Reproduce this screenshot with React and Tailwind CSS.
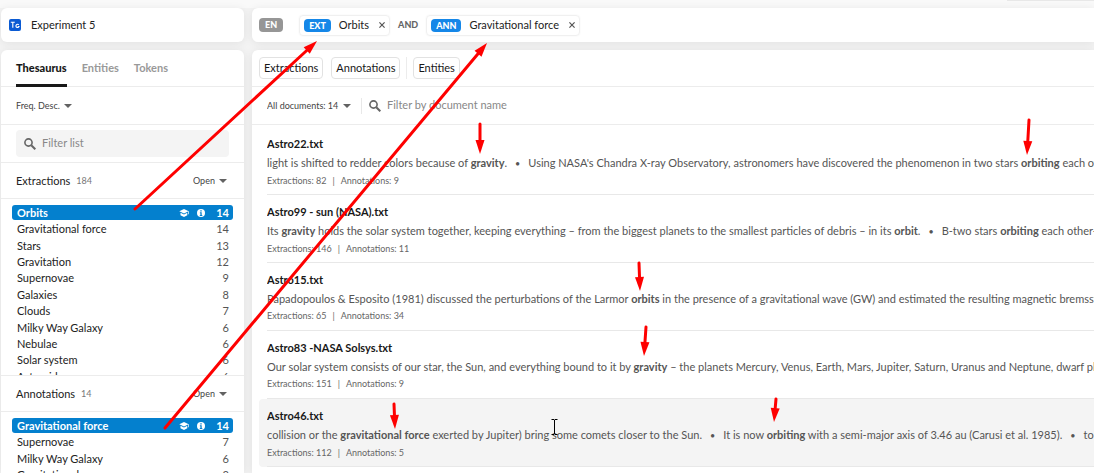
import { Fragment } from "react";

const extractions = [
  ["Orbits", 14],
  ["Gravitational force", 14],
  ["Stars", 13],
  ["Gravitation", 12],
  ["Supernovae", 9],
  ["Galaxies", 8],
  ["Clouds", 7],
  ["Milky Way Galaxy", 6],
  ["Nebulae", 6],
  ["Solar system", 6],
  ["Asteroid", 6],
];

const annotations = [
  ["Gravitational force", 14],
  ["Supernovae", 7],
  ["Milky Way Galaxy", 6],
  ["Gravitational", 3],
  ["Nebulae", 3],
];

// Each document holds a list of snippets; odd parts of a snippet are highlighted hits.
const documents = [
  {
    name: "Astro22.txt",
    snippets: [
      ["light is shifted to redder colors because of ", "gravity", "."],
      [
        "Using NASA's Chandra X-ray Observatory, astronomers have discovered the phenomenon in two stars ",
        "orbiting",
        " each other in our galaxy.",
      ],
    ],
    extractions: 82,
    annotations: 9,
  },
  {
    name: "Astro99 - sun (NASA).txt",
    snippets: [
      [
        "Its ",
        "gravity",
        " holds the solar system together, keeping everything – from the biggest planets to the smallest particles of debris – in its ",
        "orbit",
        ".",
      ],
      ["B-two stars ", "orbiting", " each other-are found."],
    ],
    extractions: 146,
    annotations: 11,
  },
  {
    name: "Astro15.txt",
    snippets: [
      [
        "Papadopoulos & Esposito (1981) discussed the perturbations of the Larmor ",
        "orbits",
        " in the presence of a gravitational wave (GW) and estimated the resulting magnetic bremsstrahlung radiation.",
      ],
    ],
    extractions: 65,
    annotations: 34,
  },
  {
    name: "Astro83 -NASA Solsys.txt",
    snippets: [
      [
        "Our solar system consists of our star, the Sun, and everything bound to it by ",
        "gravity",
        " – the planets Mercury, Venus, Earth, Mars, Jupiter, Saturn, Uranus and Neptune, dwarf planets such as Pluto.",
      ],
    ],
    extractions: 151,
    annotations: 9,
  },
  {
    name: "Astro46.txt",
    active: true,
    snippets: [
      ["collision or the ", "gravitational force", " exerted by Jupiter) bring some comets closer to the Sun."],
      ["It is now ", "orbiting", " with a semi-major axis of 3.46 au (Carusi et al. 1985)."],
      ["to lose its volatile ices."],
    ],
    extractions: 112,
    annotations: 5,
  },
];

const arrows = [
  [135, 209, 317, 41],
  [165, 428, 487, 43],
  [480, 124, 480, 154],
  [1029, 120, 1027, 155],
  [639, 263, 640, 291],
  [646, 327, 644, 356],
  [394, 404, 395, 429],
  [776, 399, 774, 422],
];

function Arrow({ points: [x1, y1, x2, y2] }) {
  const length = Math.hypot(x2 - x1, y2 - y1);
  const ux = (x2 - x1) / length;
  const uy = (y2 - y1) / length;
  const bx = x2 - ux * 14;
  const by = y2 - uy * 14;
  const head = `${x2},${y2} ${bx - uy * 4.5},${by + ux * 4.5} ${bx + uy * 4.5},${by - ux * 4.5}`;
  return (
    <g>
      <line x1={x1} y1={y1} x2={bx} y2={by} stroke="#fe0000" strokeWidth="3" strokeLinecap="round" />
      <polygon points={head} fill="#fe0000" />
    </g>
  );
}

function Caret() {
  return (
    <svg viewBox="0 0 8 4" className="pointer-events-none h-1 w-2 shrink-0" aria-hidden="true">
      <path d="M0 0h8L4 4z" fill="#626262" />
    </svg>
  );
}

function SearchIcon() {
  return (
    <svg viewBox="0 0 12 12" className="h-3 w-3 shrink-0" fill="none" stroke="#666" aria-hidden="true">
      <circle cx="4.5" cy="4.5" r="3.6" strokeWidth="1.6" />
      <path d="M7.3 7.3l4 4" strokeWidth="2" />
    </svg>
  );
}

function CloseIcon() {
  return (
    <svg viewBox="0 0 6 6" className="h-1.5 w-1.5" stroke="#555" strokeWidth="1.2" aria-hidden="true">
      <path d="M0.4 0.4l5.2 5.2M5.6 0.4L0.4 5.6" />
    </svg>
  );
}

function Dropdown({ label, value, className }) {
  return (
    <label className={`flex items-center gap-1 text-[9px] leading-4 text-[#444] ${className ?? ""}`}>
      <select aria-label={label} className="appearance-none bg-transparent outline-none">
        <option>{value}</option>
      </select>
      <Caret />
    </label>
  );
}

function SectionHeader({ title, count }) {
  return (
    <div className="flex h-9 shrink-0 items-center border-b border-[#ececec] pl-[15px] pr-[17px]">
      <h2 className="text-[11px] leading-4 text-[#222]">{title}</h2>
      <span className="ml-1.5 text-[9px] leading-4 text-[#777]">{count}</span>
      <Dropdown label={`${title} filter`} value="Open" className="ml-auto" />
    </div>
  );
}

function TermRow({ name, count, selected }) {
  if (selected) {
    return (
      <li>
        <button
          type="button"
          className="flex h-[15px] w-full items-center rounded-[3px] bg-[#0480ce] px-1 pl-[5px] text-[11px] leading-[15px] font-bold text-white"
        >
          <span>{name}</span>
          <svg viewBox="0 0 10 8" className="ml-auto h-2 w-[10px]" fill="#fff" aria-hidden="true">
            <path d="M5 0L0.3 2.3 5 4.6l4-2v2.6h.7V2.3z" />
            <path d="M1.5 3.8v2.5L5 8l3.3-1.7V3.8L5 5.5z" />
          </svg>
          <svg viewBox="0 0 8 8" className="ml-2 h-2 w-2" aria-hidden="true">
            <circle cx="4" cy="4" r="4" fill="#fff" />
            <path d="M3.3 1.2h1.4v1.3H3.3zM2.9 3.3h1.8v2.8h.6v.9H2.8v-.9h.6V4.2h-.5z" fill="#0480ce" />
          </svg>
          <span className="w-6 text-right">{count}</span>
        </button>
      </li>
    );
  }
  return (
    <li>
      <button type="button" className="flex h-[15px] w-full items-center justify-between pr-1 pl-[5px] text-[11px] leading-[15px] text-[#222]">
        <span>{name}</span>
        <span className="text-[#555]">{count}</span>
      </button>
    </li>
  );
}

function QueryChip({ tag, name }) {
  return (
    <div className="flex h-[21px] items-center rounded border border-[#f0f0f0] px-1 shadow-[0_0_2px_rgba(0,0,0,0.05)]">
      <span className="rounded bg-[#1587e8] px-[5px] text-[9px] leading-[13px] font-black text-white">{tag}</span>
      <span className="ml-2 text-[11px] leading-4 text-[#222]">{name}</span>
      <button type="button" aria-label={`Remove ${name}`} className="ml-2.5 flex">
        <CloseIcon />
      </button>
    </div>
  );
}

function Snippet({ parts }) {
  return parts.map((part, i) => (i % 2 ? <b key={i}>{part}</b> : <Fragment key={i}>{part}</Fragment>));
}

function DocumentRow({ doc }) {
  return (
    <li className={doc.active ? "ml-[7px] rounded-l bg-[#f4f4f4] pl-2" : "ml-[15px]"}>
      <article className="flex h-[68px] flex-col overflow-hidden border-b border-[#e8e8e8] pt-[9px] whitespace-nowrap">
        <h3 className="text-[11px] leading-4 font-bold text-[#181818]">
          <a href="#document">{doc.name}</a>
        </h3>
        <p className="mt-[3px] text-[11px] leading-4 text-[#555]">
          {doc.snippets.map((parts, i) => (
            <Fragment key={i}>
              {i > 0 && <span className="mx-2 text-[9px]">•</span>}
              <Snippet parts={parts} />
            </Fragment>
          ))}
        </p>
        <p className="mt-px flex gap-1.5 text-[9px] leading-4 text-[#666]">
          <span>Extractions: {doc.extractions}</span>
          <span>|</span>
          <span>Annotations: {doc.annotations}</span>
        </p>
      </article>
    </li>
  );
}

const cardShadow = "shadow-[0_1px_8px_rgba(0,0,0,0.08)]";

export default function App() {
  return (
    <div className="relative flex h-screen flex-col overflow-hidden bg-[#f3f3f3] font-['Lato','Open_Sans',sans-serif] text-[11px]">
      <div className="flex h-2 shrink-0 justify-end bg-[#f9f9f9]">
        <div className="h-px w-[87px] bg-[#e8e8e8]" />
      </div>
      <div className="flex min-h-0 flex-1 gap-2 pl-px">
        <div className="flex w-[243px] shrink-0 flex-col gap-2">
          <header className={`flex h-[34px] shrink-0 items-center gap-2.5 rounded-md bg-white pl-2 ${cardShadow}`}>
            <svg viewBox="0 0 12 12" className="h-3 w-3" aria-hidden="true">
              <rect width="12" height="12" rx="2" fill="#0b5bd3" />
              <path d="M1.8 3.3h4M3.8 3.3v5.4M9.8 5.9a1.6 1.6 0 1 0 .2 1.6H8.7" fill="none" stroke="#fff" strokeWidth="1.1" />
            </svg>
            <h1 className="text-[11px] leading-4 text-[#222]">Experiment 5</h1>
          </header>
          <aside className={`flex min-h-0 flex-1 flex-col rounded-t-md bg-white ${cardShadow}`}>
            <nav className="flex h-[37px] shrink-0 gap-[15px] border-b border-[#ececec] pl-[15px] text-[11px] font-bold text-[#999]">
              <button type="button" className="-mb-px border-b-[3px] border-[#181818] pt-[3px] font-black text-[#181818]">
                Thesaurus
              </button>
              <button type="button">Entities</button>
              <button type="button">Tokens</button>
            </nav>
            <div className="flex h-[38px] shrink-0 items-center border-b border-[#ececec] pl-[15px]">
              <Dropdown label="Sort order" value="Freq. Desc." />
            </div>
            <div className="flex h-[38px] shrink-0 border-b border-[#ececec] px-[15px] pt-[5px] pb-[5px]">
              <label className="flex flex-1 items-center gap-1.5 rounded bg-[#f4f4f4] pl-2">
                <SearchIcon />
                <input aria-label="Filter list" placeholder="Filter list" className="min-w-0 flex-1 bg-transparent text-[11px] outline-none placeholder:text-[#888]" />
              </label>
            </div>
            <SectionHeader title="Extractions" count={184} />
            <div className="h-[177px] shrink-0 overflow-hidden border-b border-[#ececec] px-[11px] pt-1.5">
              <ul className="grid h-[180px] auto-rows-fr">
                {extractions.map(([name, count], i) => (
                  <TermRow key={name} name={name} count={count} selected={i === 0} />
                ))}
              </ul>
            </div>
            <SectionHeader title="Annotations" count={14} />
            <div className="min-h-0 flex-1 overflow-hidden px-[11px] pt-1.5">
              <ul className="grid h-[82px] auto-rows-fr">
                {annotations.map(([name, count], i) => (
                  <TermRow key={name} name={name} count={count} selected={i === 0} />
                ))}
              </ul>
            </div>
          </aside>
        </div>

        <div className="flex min-w-0 flex-1 flex-col gap-2">
          <div className={`flex h-[34px] shrink-0 items-center rounded-l-md bg-white pl-[7px] ${cardShadow}`}>
            <span className="rounded bg-[#969696] px-1.5 text-[9px] leading-[14px] font-black text-white">EN</span>
            <div className="ml-4 flex items-center gap-2">
              <QueryChip tag="EXT" name="Orbits" />
              <span className="text-[9px] font-black text-[#666]">AND</span>
              <QueryChip tag="ANN" name="Gravitational force" />
            </div>
          </div>
          <main className={`flex min-h-0 flex-1 flex-col rounded-tl-md bg-white ${cardShadow}`}>
            <div className="flex h-[37px] shrink-0 items-center border-b border-[#ececec] pl-[7px] text-[11px] text-[#181818]">
              <div className="flex gap-2">
                <button type="button" className="h-[22px] rounded border border-[#e2e2e2] px-1">Extractions</button>
                <button type="button" className="h-[22px] rounded border border-[#e2e2e2] px-1">Annotations</button>
              </div>
              <div className="ml-1.5 flex items-center border-l border-[#ececec] pl-1.5">
                <button type="button" className="h-[22px] rounded border border-[#e2e2e2] px-1">Entities</button>
              </div>
            </div>
            <div className="flex h-[38px] shrink-0 items-center border-b border-[#ececec] pl-[15px]">
              <Dropdown label="Document set" value="All documents: 14" />
              <label className="ml-2.5 flex h-4 flex-1 items-center gap-1.5 border-l border-[#e8e8e8] pl-[7px]">
                <SearchIcon />
                <input
                  aria-label="Filter by document name"
                  placeholder="Filter by document name"
                  className="min-w-0 flex-1 bg-transparent text-[11px] outline-none placeholder:text-[#888]"
                />
              </label>
            </div>
            <ul className="min-h-0 flex-1 overflow-hidden pt-0.5">
              {documents.map((doc) => (
                <DocumentRow key={doc.name} doc={doc} />
              ))}
            </ul>
          </main>
        </div>
      </div>

      <svg viewBox="0 0 1094 473" className="pointer-events-none absolute top-0 left-0 h-[473px] w-[1094px]" aria-hidden="true">
        {arrows.map((points) => (
          <Arrow key={points.join()} points={points} />
        ))}
        <path d="M551.5 419.5h2.5l.5.5.5-.5h2.5M554.5 420v14M551.5 434.5h2.5l.5-.5.5.5h2.5" fill="none" stroke="#000" />
      </svg>
    </div>
  );
}
